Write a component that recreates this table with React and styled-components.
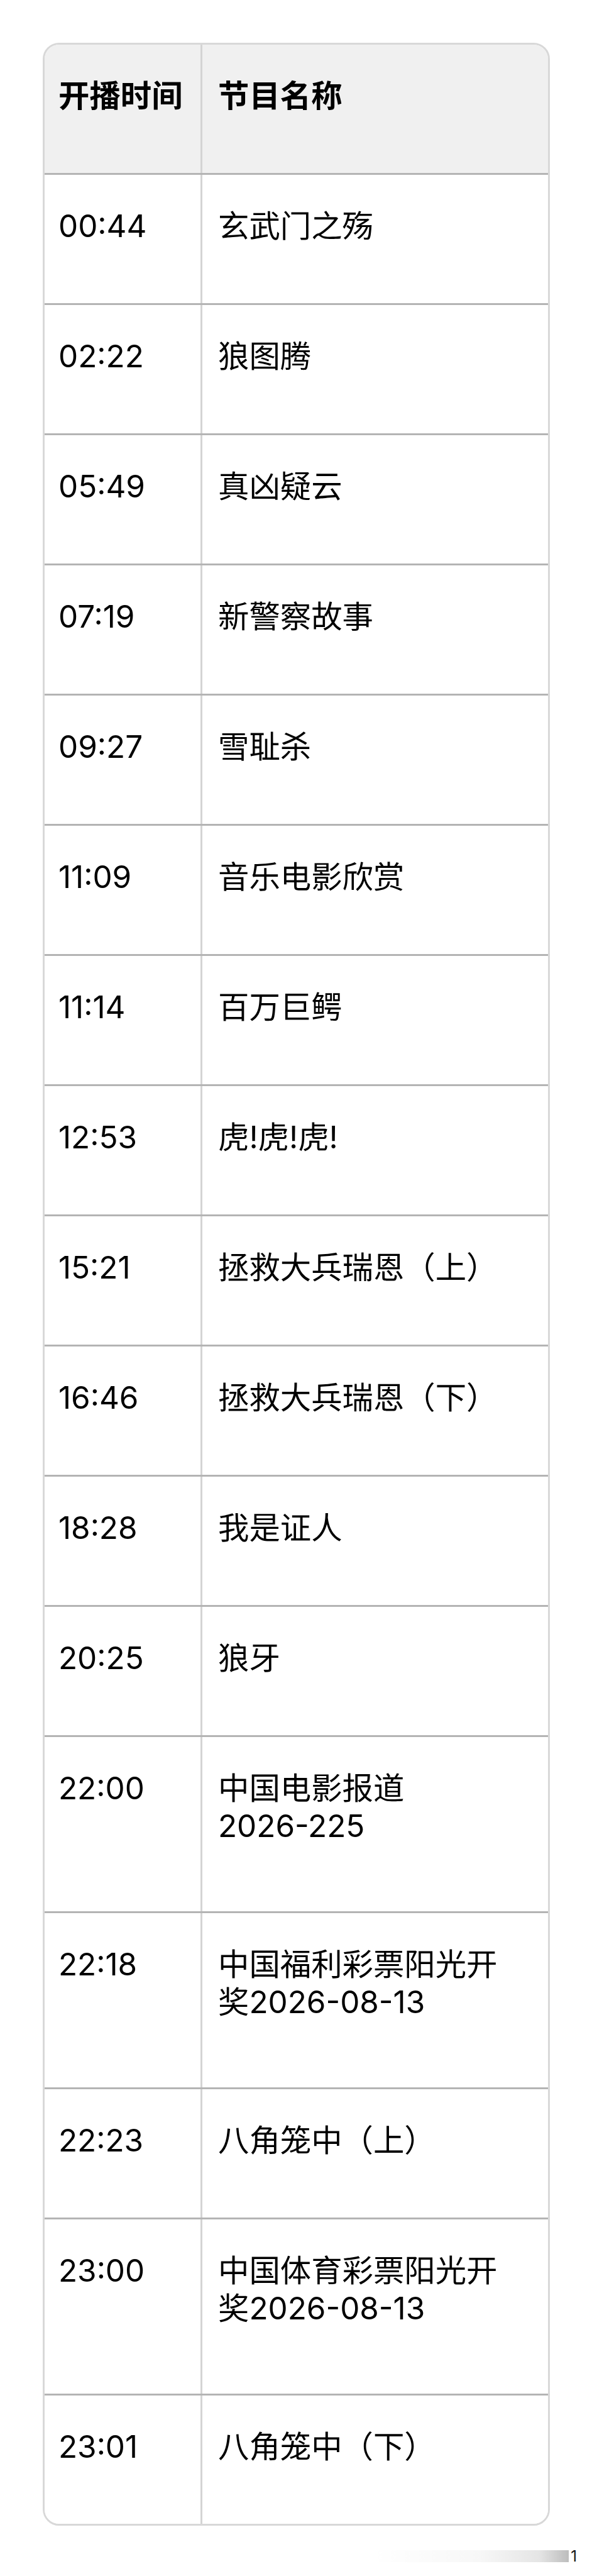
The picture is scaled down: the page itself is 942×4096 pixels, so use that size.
import styled, { createGlobalStyle } from "styled-components";

const GlobalStyle = createGlobalStyle`
  * {
    box-sizing: border-box;
  }
  body {
    margin: 0;
    background: #ffffff;
    font-family: Inter, "Noto Sans CJK SC", sans-serif;
    color: #000000;
  }
`;

const schedule = [
  { time: "00:44", title: "玄武门之殇" },
  { time: "02:22", title: "狼图腾" },
  { time: "05:49", title: "真凶疑云" },
  { time: "07:19", title: "新警察故事" },
  { time: "09:27", title: "雪耻杀" },
  { time: "11:09", title: "音乐电影欣赏" },
  { time: "11:14", title: "百万巨鳄" },
  { time: "12:53", title: "虎!虎!虎!" },
  { time: "15:21", title: "拯救大兵瑞恩（上）" },
  { time: "16:46", title: "拯救大兵瑞恩（下）" },
  { time: "18:28", title: "我是证人" },
  { time: "20:25", title: "狼牙" },
  { time: "22:00", title: "中国电影报道2026-225", wrapped: true },
  { time: "22:18", title: "中国福利彩票阳光开奖2026-08-13", wrapped: true },
  { time: "22:23", title: "八角笼中（上）" },
  { time: "23:00", title: "中国体育彩票阳光开奖2026-08-13", wrapped: true },
  { time: "23:01", title: "八角笼中（下）" },
];

// keep dates like 2026-08-13 on one line
const renderTitle = (title) =>
  title.split(/(\d[\d-]*\d)/).map((part, i) =>
    /^\d[\d-]*\d$/.test(part) ? <NoBreak key={i}>{part}</NoBreak> : part
  );

const App = () => {
  return (
    <Page>
      <GlobalStyle />
      <TableCard>
        <Row $head>
          <Cell>开播时间</Cell>
          <Cell $name>节目名称</Cell>
        </Row>
        {schedule.map((item) => (
          <Row key={item.time} $wrapped={item.wrapped}>
            <Cell>{item.time}</Cell>
            <Cell $name>{renderTitle(item.title)}</Cell>
          </Row>
        ))}
      </TableCard>

      <PageFooter>
        <Fade />
        <PageNum>1</PageNum>
      </PageFooter>
    </Page>
  );
};

const Page = styled.div`
  width: 942px;
  padding: 68px 0 24px;
`;

const TableCard = styled.div`
  margin: 0 67px 0 68px;
  border: 3px solid #d8d8d8;
  border-radius: 26px;
  overflow: hidden;
`;

const Row = styled.div`
  display: grid;
  grid-template-columns: 248px 1fr;
  background: ${(p) => (p.$head ? "#f0f0f0" : "#ffffff")};
  border-top: ${(p) => (p.$head ? "none" : "3px solid #b4b4b4")};
  font-weight: ${(p) => (p.$head ? 700 : 400)};

  & > div {
    padding-bottom: ${(p) => (p.$wrapped ? "106px" : "93px")};
  }
`;

const Cell = styled.div`
  padding-top: 51px;
  padding-left: ${(p) => (p.$name ? "25px" : "22px")};
  padding-right: ${(p) => (p.$name ? "40px" : "12px")};
  border-left: ${(p) => (p.$name ? "3px solid #d4d4d4" : "none")};
  font-size: 49.4px;
  line-height: 60px;
`;

const NoBreak = styled.span`
  white-space: nowrap;
`;

const PageFooter = styled.div`
  display: flex;
  justify-content: flex-end;
  align-items: center;
  margin-top: 39px;
  padding-right: 24px;
`;

const Fade = styled.div`
  width: 315px;
  height: 19px;
  background: linear-gradient(
    to right,
    rgba(0, 0, 0, 0) 0%,
    rgba(0, 0, 0, 0.03) 55%,
    rgba(0, 0, 0, 0.1) 85%,
    rgba(0, 0, 0, 0.26) 100%
  );
`;

const PageNum = styled.span`
  margin-left: 3px;
  font-family: Inter, sans-serif;
  font-size: 24px;
  line-height: 19px;
  color: #111111;
`;

export default App;
